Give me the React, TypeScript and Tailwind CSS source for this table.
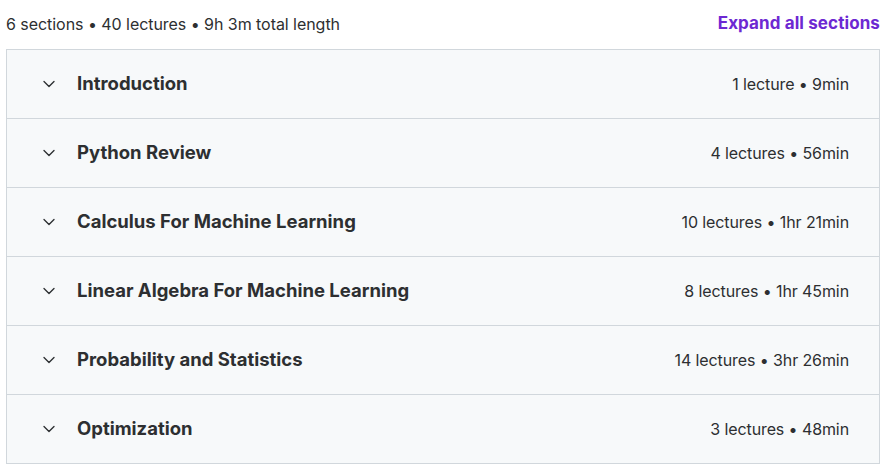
import { ChevronDown } from "lucide-react";

const sections = [
  { title: "Introduction", meta: "1 lecture • 9min" },
  { title: "Python Review", meta: "4 lectures • 56min" },
  { title: "Calculus For Machine Learning", meta: "10 lectures • 1hr 21min" },
  { title: "Linear Algebra For Machine Learning", meta: "8 lectures • 1hr 45min" },
  { title: "Probability and Statistics", meta: "14 lectures • 3hr 26min" },
  { title: "Optimization", meta: "3 lectures • 48min" },
];

export default function App() {
  return (
    <div
      className="w-[887px] h-[471px] bg-white pl-[6px] pr-[7px] text-[#2d2f31]"
      style={{ fontFamily: "Inter, 'Liberation Sans', sans-serif" }}
    >
      {/* header */}
      <div className="h-[49px] flex items-center justify-between">
        <span className="text-[16px] tracking-[-0.05px] -mt-[1px]">
          6 sections • 40 lectures • 9h 3m total length
        </span>
        <button className="text-[17px] font-bold text-[#6d28d2] -mt-[1px] tracking-[0.1px]">
          Expand all sections
        </button>
      </div>

      {/* sections */}
      <div className="border border-[#d1d7dc]">
        {sections.map((s, i) => (
          <div
            key={s.title}
            className={`bg-[#f7f9fa] flex items-center justify-between pl-[32px] pr-[30px] ${
              i > 0 ? "h-[69px] border-t border-[#d1d7dc]" : "h-[68px]"
            }`}
          >
            <div className="flex items-center gap-[18px] -mt-[1px]">
              <ChevronDown className="w-[20px] h-[20px]" strokeWidth={1.6} />
              <span className="text-[18.5px] font-bold">{s.title}</span>
            </div>
            <span className="text-[16px] tracking-[-0.1px]">{s.meta}</span>
          </div>
        ))}
      </div>
    </div>
  );
}
